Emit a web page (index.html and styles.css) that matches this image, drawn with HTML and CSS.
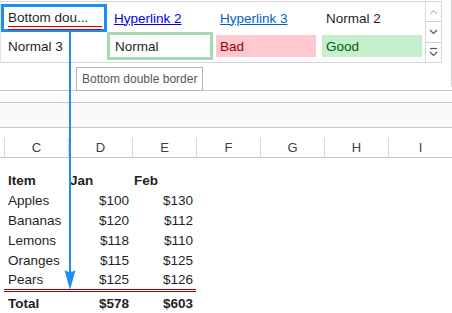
FILE: index.html
```html
<!DOCTYPE html>
<html lang="en">
<head>
    <meta charset="UTF-8">
    <title>Cell styles - bottom double border</title>
    <link rel="stylesheet" href="styles.css">
</head>
<body>

    <div class="ribbon">
        <div class="gallery">
            <div class="styles">
                <div class="cell selected"><span class="dbl">Bottom dou...</span></div>
                <div class="cell"><span class="link2">Hyperlink 2</span></div>
                <div class="cell"><span class="link3">Hyperlink 3</span></div>
                <div class="cell">Normal 2</div>
                <div class="cell">Normal 3</div>
                <div class="cell normal">Normal</div>
                <div class="cell"><span class="fill bad">Bad</span></div>
                <div class="cell"><span class="fill good">Good</span></div>
            </div>
            <div class="scroll">
                <div class="sbtn">
                    <svg width="9" height="6" viewBox="0 0 9 6"><path d="M1 5 L4.5 1.5 L8 5" fill="none" stroke="#c4c4c4" stroke-width="1.2"/></svg>
                </div>
                <div class="sbtn">
                    <svg width="9" height="6" viewBox="0 0 9 6"><path d="M1 1 L4.5 4.5 L8 1" fill="none" stroke="#555" stroke-width="1.2"/></svg>
                </div>
                <div class="sbtn">
                    <svg width="9" height="10" viewBox="0 0 9 10"><path d="M1 1.5 H8" stroke="#555" stroke-width="1.2"/><path d="M1 5 L4.5 8.5 L8 5" fill="none" stroke="#555" stroke-width="1.2"/></svg>
                </div>
            </div>
        </div>
        <div class="edge"></div>
        <div class="tooltip">Bottom double border</div>
    </div>

    <div class="formula-bar"></div>

    <div class="col-heads">
        <div class="corner"></div>
        <div class="ch">C</div>
        <div class="ch">D</div>
        <div class="ch">E</div>
        <div class="ch">F</div>
        <div class="ch">G</div>
        <div class="ch">H</div>
        <div class="ch">I</div>
    </div>

    <table class="sheet">
        <tr class="head"><td>Item</td><td class="left">Jan</td><td class="left">Feb</td></tr>
        <tr><td>Apples</td><td>$100</td><td>$130</td></tr>
        <tr><td>Bananas</td><td>$120</td><td>$112</td></tr>
        <tr><td>Lemons</td><td>$118</td><td>$110</td></tr>
        <tr><td>Oranges</td><td>$115</td><td>$125</td></tr>
        <tr class="last"><td>Pears</td><td>$125</td><td>$126</td></tr>
        <tr class="total"><td>Total</td><td>$578</td><td>$603</td></tr>
    </table>

    <!-- arrow from the selected style down to the new border -->
    <svg class="arrow" width="14" height="260" viewBox="0 0 14 260">
        <rect x="6" y="0" width="2" height="242" fill="#1e8cf5"/>
        <path d="M1.5 238 Q7 242 12.5 238 L7 258 Z" fill="#1e8cf5"/>
    </svg>

</body>
</html>
```

FILE: styles.css
```css
body {
    margin: 0;
    width: 452px;
    height: 313px;
    overflow: hidden;
    background: #fff;
    font-family: "Liberation Sans", Arial, sans-serif;
    color: #1f1f1f;
    position: relative;
}

.ribbon {
    height: 90px;
    border-bottom: 1px solid #c8c8c8;
    display: flex;
    align-items: flex-start;
    position: relative;
}

.gallery {
    margin-top: 1px;
    width: 440px;
    height: 60px;
    border: 1px solid #d6d6d6;
    border-left-color: #e2e2e2;
    display: flex;
}

.styles {
    width: 425px;
    display: grid;
    grid-template-columns: repeat(4, 106px);
    grid-template-rows: 28px 28px;
    padding-top: 2px;
}

.cell {
    font-size: 13.5px;
    display: flex;
    align-items: center;
    padding-left: 7px;
    box-sizing: border-box;
    position: relative;
}

.selected {
    border: 3px solid #1e8cf5;
    padding: 0 2px 0 4px;
}

.dbl {
    flex: 1;
    border-bottom: 4px double #d00000;
    line-height: 17px;
    margin-top: 3px;
}

.link2 {
    color: #0000ee;
    text-decoration: underline;
}

.link3 {
    color: #0563c1;
    text-decoration: underline;
}

.normal {
    border: 3px solid #a3d9b5;
    padding-left: 5px;
}

.cell:has(.fill) {
    padding: 3px;
}

.fill {
    flex: 1;
    height: 22px;
    display: flex;
    align-items: center;
    padding-left: 4px;
}

.bad {
    background: #ffc7ce;
    color: #9c0006;
}

.good {
    background: #c6efce;
    color: #006100;
}

.scroll {
    width: 15px;
    border-left: 1px solid #d6d6d6;
    display: flex;
    flex-direction: column;
}

.sbtn {
    flex: 1;
    display: flex;
    align-items: center;
    justify-content: center;
    border-bottom: 1px solid #cfcfcf;
}

.sbtn:last-child {
    border-bottom: none;
}

.edge {
    margin-left: 9px;
    width: 1px;
    height: 87px;
    background: #d0d0d0;
}

.tooltip {
    position: absolute;
    left: 76px;
    top: 67px;
    height: 22px;
    padding: 0 5px;
    border: 1px solid #b4b4b4;
    background: #fff;
    color: #575757;
    font-size: 12px;
    line-height: 22px;
    z-index: 2;
}

.formula-bar {
    margin-top: 11px;
    height: 24px;
    border-top: 1px solid #c8c8c8;
    border-bottom: 1px solid #c8c8c8;
    background: #fafafa;
}

.col-heads {
    display: grid;
    grid-template-columns: 4px repeat(7, 64px);
    height: 29px;
    border-bottom: 1px solid #c8c8c8;
}

.ch {
    font-size: 13px;
    color: #404040;
    display: flex;
    align-items: center;
    justify-content: center;
    border-left: 1px solid #dadada;
    margin-top: 10px;
}

.corner {
    margin-top: 10px;
}

.sheet {
    margin: 12px 0 0 4px;
    border-collapse: separate;
    border-spacing: 0;
    font-size: 13.5px;
}

.sheet td {
    width: 64px;
    height: 20px;
    padding: 0 3px 0 0;
    text-align: right;
    box-sizing: border-box;
}

.sheet td:first-child {
    text-align: left;
    padding-left: 4px;
}

.sheet td.left {
    text-align: left;
    padding-left: 2px;
}

.head td,
.total td {
    font-weight: bold;
}

.last td {
    height: 22px;
    border-bottom: 3px double #a00000;
}

.total td {
    height: 22px;
}

.arrow {
    position: absolute;
    left: 63px;
    top: 32px;
}
```
